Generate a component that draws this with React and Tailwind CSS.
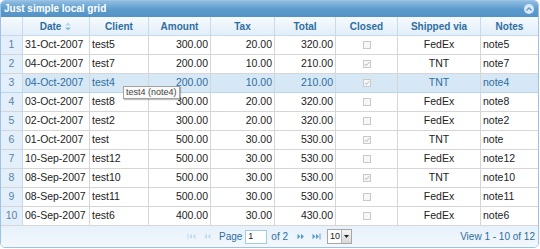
import React from "react";

const rows = [
  ["31-Oct-2007", "test5", "300.00", "20.00", "320.00", false, "FedEx", "note5"],
  ["04-Oct-2007", "test7", "200.00", "10.00", "210.00", true, "TNT", "note7"],
  ["04-Oct-2007", "test4", "200.00", "10.00", "210.00", true, "TNT", "note4"],
  ["03-Oct-2007", "test8", "300.00", "20.00", "320.00", false, "FedEx", "note8"],
  ["02-Oct-2007", "test2", "300.00", "20.00", "320.00", false, "FedEx", "note2"],
  ["01-Oct-2007", "test", "500.00", "30.00", "530.00", true, "TNT", "note"],
  ["10-Sep-2007", "test12", "500.00", "30.00", "530.00", false, "FedEx", "note12"],
  ["08-Sep-2007", "test10", "500.00", "30.00", "530.00", true, "TNT", "note10"],
  ["08-Sep-2007", "test11", "500.00", "30.00", "530.00", false, "FedEx", "note11"],
  ["06-Sep-2007", "test6", "400.00", "30.00", "430.00", false, "FedEx", "note6"],
];

const cols = [
  { label: "Date", w: "w-[67px]", align: "justify-start" },
  { label: "Client", w: "w-[59px]", align: "justify-start" },
  { label: "Amount", w: "w-[62px]", align: "justify-end" },
  { label: "Tax", w: "w-[64px]", align: "justify-end" },
  { label: "Total", w: "w-[61px]", align: "justify-end" },
  { label: "Closed", w: "w-[62px]", align: "justify-center" },
  { label: "Shipped via", w: "w-[83px]", align: "justify-center" },
  { label: "Notes", w: "flex-1", align: "justify-start" },
];

const Check = ({ on }) => (
  <span className="w-[8px] h-[8px] border border-[#c9c9c9] bg-[#f7f7f7] flex items-center justify-center">
    {on && (
      <svg width="6" height="6" viewBox="0 0 6 6">
        <path d="M0.8 3 L2.4 4.6 L5.2 1.2" fill="none" stroke="#b5b5b5" strokeWidth="1" />
      </svg>
    )}
  </span>
);

const SortIcon = () => (
  <svg width="8" height="9" viewBox="0 0 8 9" className="ml-[3px]">
    <path d="M4 0.5 L7 3.5 L1 3.5 Z" fill="#b9d3ea" />
    <path d="M4 8.5 L7 5.5 L1 5.5 Z" fill="#8fb7dc" />
  </svg>
);

const Seek = ({ dir, bar, color }) => (
  <svg width="10" height="7" viewBox="0 0 10 7">
    {dir === "left" ? (
      <g fill={color}>
        {bar && <rect x="0.5" y="0.5" width="1" height="6" />}
        <path d="M2 3.5 L5 0.8 L5 6.2 Z" />
        <path d="M5.5 3.5 L8.5 0.8 L8.5 6.2 Z" />
      </g>
    ) : (
      <g fill={color}>
        <path d="M1.5 0.8 L4.5 3.5 L1.5 6.2 Z" />
        <path d="M5 0.8 L8 3.5 L5 6.2 Z" />
        {bar && <rect x="8.5" y="0.5" width="1" height="6" />}
      </g>
    )}
  </svg>
);

export default function App() {
  return (
    <div className="bg-white w-[540px] h-[249px] font-['Liberation_Sans',Arial,sans-serif]">
      <div className="relative w-[539px] border border-[#9dc2e3] rounded-[5px] overflow-hidden">
        {/* caption */}
        <div className="h-[16px] bg-gradient-to-b from-[#8fbde3] via-[#5c9ccc] to-[#5292c7] flex items-center justify-between pl-[3px] pr-[4px]">
          <span className="text-white font-bold text-[10px] leading-none">Just simple local grid</span>
          <span className="w-[10px] h-[10px] rounded-full bg-[#d9e8f5] flex items-center justify-center">
            <svg width="6" height="4" viewBox="0 0 6 4">
              <path d="M0.5 3.5 L3 1 L5.5 3.5" fill="none" stroke="#5c9ccc" strokeWidth="1.3" />
            </svg>
          </span>
        </div>

        {/* header */}
        <div className="flex h-[19px] border-b border-[#c5dbec] bg-gradient-to-b from-[#f6fafd] to-[#e2eefa] text-[#2e6e9e] font-bold text-[10px]">
          <div className="w-[22px] shrink-0 border-r border-[#c5dbec]" />
          {cols.map((c, i) => (
            <div
              key={c.label}
              className={`${c.w} shrink-0 flex items-center justify-center ${i < 7 ? "border-r border-[#c5dbec]" : ""}`}
            >
              {c.label}
              {c.label === "Date" && <SortIcon />}
            </div>
          ))}
        </div>

        {/* rows */}
        {rows.map((r, idx) => {
          const hover = idx === 2;
          return (
            <div
              key={idx}
              className={`flex h-[19px] border-b text-[10.5px] ${
                hover ? "bg-[#d6e7f6] border-[#b9d6f0] text-[#2e6e9e]" : "bg-white border-[#d6d6d6] text-[#222]"
              }`}
            >
              <div className="w-[22px] shrink-0 border-r border-[#c5dbec] bg-[#e3effa] text-[#5a83a6] flex items-center justify-center">
                {idx + 1}
              </div>
              {cols.map((c, i) => (
                <div
                  key={c.label}
                  className={`${c.w} shrink-0 flex items-center ${c.align} px-[2px] overflow-hidden whitespace-nowrap ${
                    i < 7 ? "border-r border-[#d6d6d6]" : ""
                  }`}
                >
                  {i === 5 ? <Check on={r[5]} /> : r[i]}
                </div>
              ))}
            </div>
          );
        })}

        {/* pager */}
        <div className="h-[21px] bg-gradient-to-b from-[#e6f1fb] to-[#f3f8fd] grid grid-cols-[1fr_auto_1fr] items-center text-[10px] text-[#2e6e9e]">
          <div />
          <div className="flex items-center">
            <div className="flex items-center gap-[5px] mr-[7px]">
              <Seek dir="left" bar color="#c9dbea" />
              <Seek dir="left" color="#c9dbea" />
            </div>
            <span className="mr-[3px]">Page</span>
            <span className="w-[22px] h-[14px] border border-[#a6c9e2] bg-white text-[#222] text-[9px] flex items-center pl-[2px]">1</span>
            <span className="ml-[4px] mr-[8px]">of 2</span>
            <div className="flex items-center gap-[5px] mr-[6px]">
              <Seek dir="right" color="#5c9ccc" />
              <Seek dir="right" bar color="#5c9ccc" />
            </div>
            <span className="w-[25px] h-[15px] border border-[#a6a6a6] bg-white flex items-center text-[#222] text-[9px]">
              <span className="flex-1 pl-[2px]">10</span>
              <span className="w-[10px] h-full bg-gradient-to-b from-[#f5f5f5] to-[#d8d8d8] border-l border-[#b5b5b5] flex items-center justify-center">
                <svg width="5" height="3" viewBox="0 0 5 3">
                  <path d="M0 0 L5 0 L2.5 3 Z" fill="#222" />
                </svg>
              </span>
            </span>
          </div>
          <div className="text-right pr-[3px]">View 1 - 10 of 12</div>
        </div>

        {/* tooltip */}
        <div className="absolute left-[122px] top-[85px] h-[13px] px-[2px] border border-[#a3a3a3] bg-[#fafafa] shadow-[1px_1px_1px_rgba(0,0,0,0.25)] text-[9px] leading-[11px] text-[#444] whitespace-nowrap">
          test4 (note4)
        </div>
      </div>
    </div>
  );
}
